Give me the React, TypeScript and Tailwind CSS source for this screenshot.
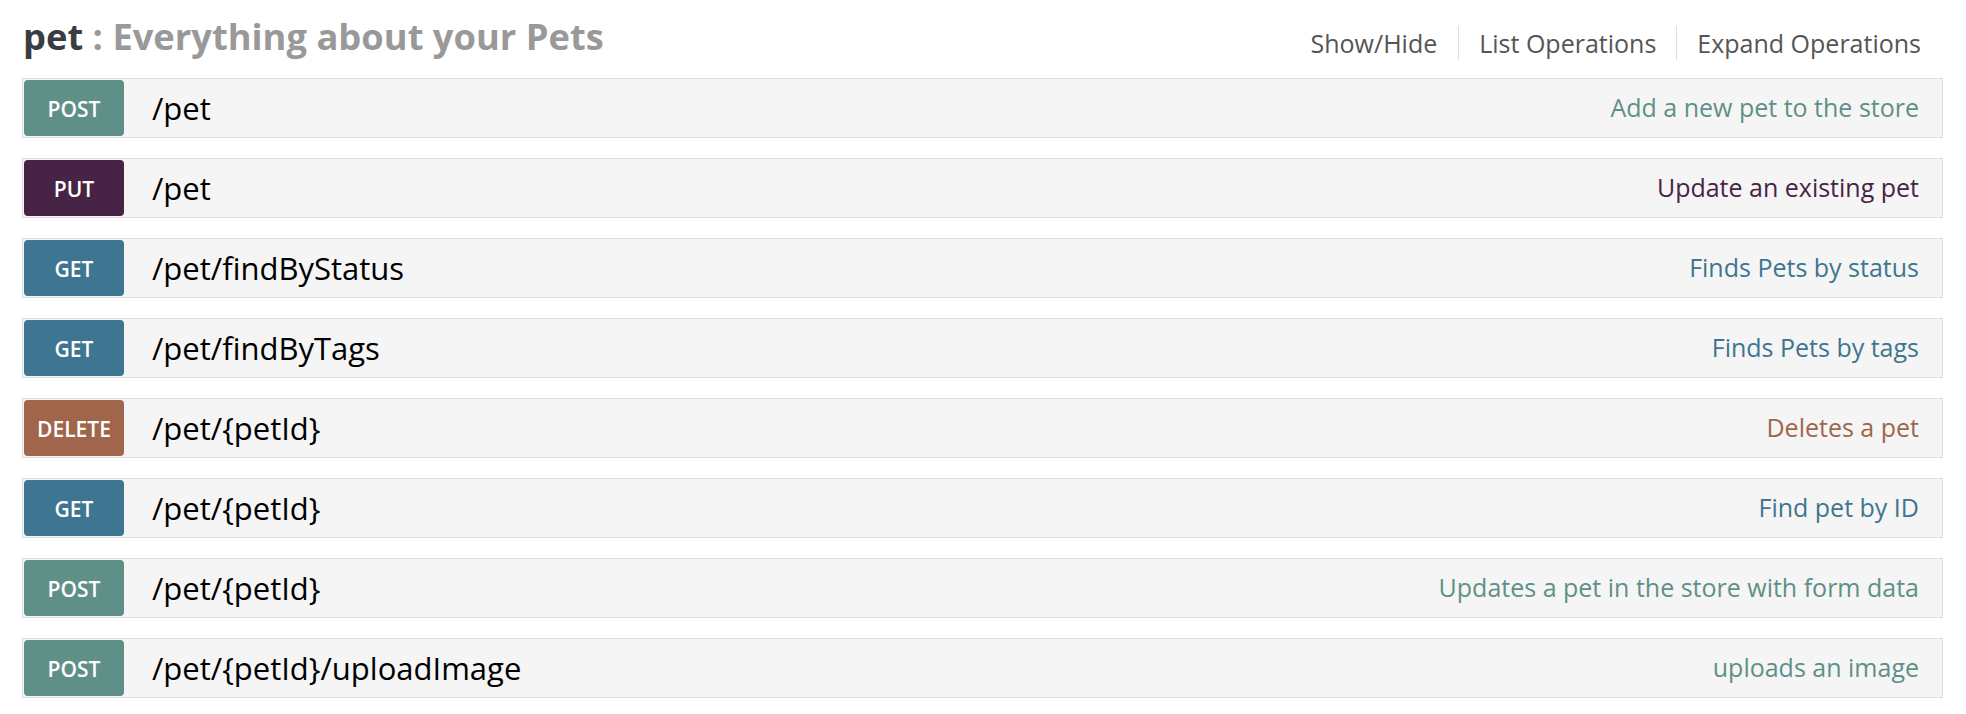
const methodStyles: Record<string, { badge: string; text: string }> = {
  POST: { badge: 'bg-[#5f9087]', text: 'text-[#5f9087]' },
  PUT: { badge: 'bg-[#472445]', text: 'text-[#472445]' },
  GET: { badge: 'bg-[#3e7590]', text: 'text-[#3e7590]' },
  DELETE: { badge: 'bg-[#a0664b]', text: 'text-[#a0664b]' },
}

const operations = [
  { method: 'POST', path: '/pet', summary: 'Add a new pet to the store' },
  { method: 'PUT', path: '/pet', summary: 'Update an existing pet' },
  { method: 'GET', path: '/pet/findByStatus', summary: 'Finds Pets by status' },
  { method: 'GET', path: '/pet/findByTags', summary: 'Finds Pets by tags' },
  { method: 'DELETE', path: '/pet/{petId}', summary: 'Deletes a pet' },
  { method: 'GET', path: '/pet/{petId}', summary: 'Find pet by ID' },
  { method: 'POST', path: '/pet/{petId}', summary: 'Updates a pet in the store with form data' },
  { method: 'POST', path: '/pet/{petId}/uploadImage', summary: 'uploads an image' },
]

export default function App() {
  return (
    <div className="min-h-screen bg-white pl-[22px] pr-[23px] font-['Open_Sans',sans-serif]">
      {/* Resource heading */}
      <div className="flex h-[78px] items-start justify-between">
        <h2 className="mt-[18px] pl-[1px] text-[36.3px] font-bold leading-[36px] text-[#999999]">
          <span className="text-[#393c41]">pet</span> : Everything about your Pets
        </h2>
        <ul className="mt-[26px] flex text-[25px] leading-[34px] text-[#555555]">
          <li className="pr-[21px]">
            <a href="#">Show/Hide</a>
          </li>
          <li className="border-l border-[#dddddd] px-[20px]">
            <a href="#">List Operations</a>
          </li>
          <li className="border-l border-[#dddddd] pl-[20px] pr-[22px]">
            <a href="#">Expand Operations</a>
          </li>
        </ul>
      </div>

      {/* Operations */}
      <ul className="flex flex-col gap-[20px]">
        {operations.map((op, index) => (
          <li
            key={index}
            className="flex h-[60px] items-center border border-[#d8dde1] bg-[#f5f5f5] p-px"
          >
            <span
              className={`flex h-[56px] w-[100px] items-center justify-center rounded-[4px] pt-[4px] text-[21px] font-semibold text-white ${methodStyles[op.method].badge}`}
            >
              {op.method}
            </span>
            <span className="ml-[28px] text-[31px] text-black">{op.path}</span>
            <span className={`ml-auto mr-[22px] text-[25px] ${methodStyles[op.method].text}`}>
              {op.summary}
            </span>
          </li>
        ))}
      </ul>
    </div>
  )
}
